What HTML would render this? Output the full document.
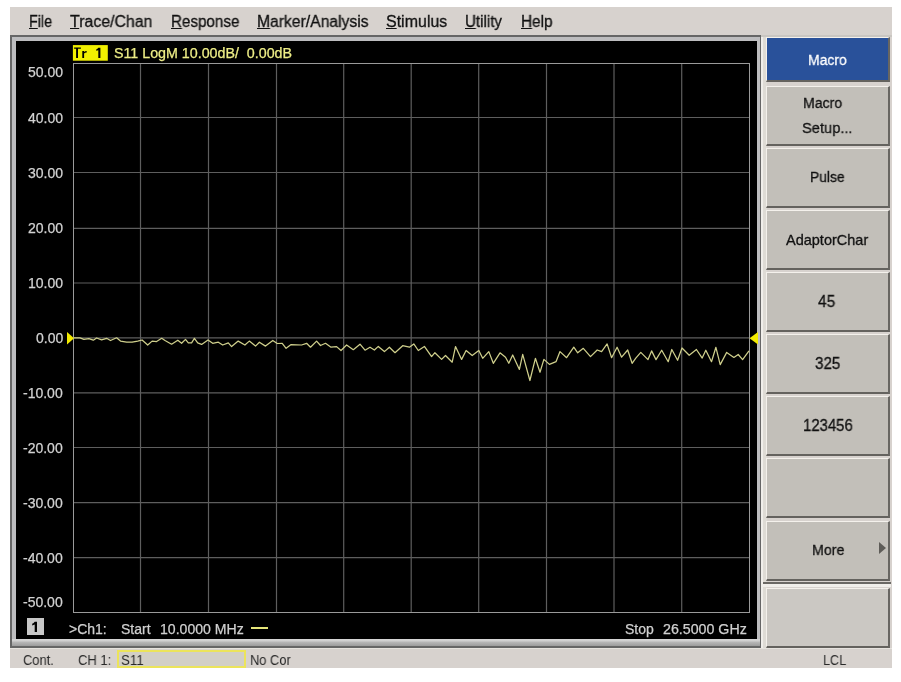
<!DOCTYPE html>
<html><head><meta charset="utf-8"><style>
*{margin:0;padding:0;box-sizing:border-box}
html,body{width:901px;height:682px;overflow:hidden;background:#fff;font-family:"Liberation Sans",sans-serif}
#w{position:absolute;left:0;top:0;width:901px;height:682px;filter:blur(0.35px)}
.a{position:absolute}
.t{position:absolute;white-space:nowrap;will-change:transform}
.b{-webkit-text-stroke:0.3px currentColor}
.p{-webkit-text-stroke:0.25px currentColor}
.t u{text-decoration:underline;text-underline-offset:0.7px;text-decoration-thickness:1px}
.btn{position:absolute;left:766px;width:124px;background:#c2bfb9;border-top:1px solid #f4f1ec;border-left:1px solid #f4f1ec;border-right:2px solid #686662;border-bottom:2px solid #64625e}
</style></head><body><div id="w">
<div class="a" style="left:10px;top:7px;width:882px;height:661px;background:#d7d2ce"></div>
<div class="t b" style="left:29.20px;top:13.96px;font-size:16px;line-height:16px;color:#111;transform:scaleX(0.8929);transform-origin:0.00px 0;"><u>F</u>ile</div>
<div class="t b" style="left:70.00px;top:13.96px;font-size:16px;line-height:16px;color:#111;transform:scaleX(0.9935);transform-origin:0.00px 0;"><u>T</u>race/Chan</div>
<div class="t b" style="left:171.00px;top:13.96px;font-size:16px;line-height:16px;color:#111;transform:scaleX(0.9489);transform-origin:0.00px 0;"><u>R</u>esponse</div>
<div class="t b" style="left:257.20px;top:13.96px;font-size:16px;line-height:16px;color:#111;transform:scaleX(0.9803);transform-origin:0.00px 0;"><u>M</u>arker/Analysis</div>
<div class="t b" style="left:386.00px;top:13.96px;font-size:16px;line-height:16px;color:#111;transform:scaleX(0.9974);transform-origin:0.00px 0;"><u>S</u>timulus</div>
<div class="t b" style="left:465.00px;top:13.96px;font-size:16px;line-height:16px;color:#111;transform:scaleX(0.9458);transform-origin:0.00px 0;"><u>U</u>tility</div>
<div class="t b" style="left:521.00px;top:13.96px;font-size:16px;line-height:16px;color:#111;transform:scaleX(0.9580);transform-origin:0.00px 0;"><u>H</u>elp</div>

<!-- plot frame -->
<div class="a" style="left:10px;top:35px;width:751px;height:613px;background:#666"></div>
<div class="a" style="left:10px;top:648px;width:882px;height:1px;background:#e6e3de"></div>
<div class="a" style="left:12px;top:37px;width:748px;height:609px;background:#bdbdbf"></div>
<div class="a" style="left:12px;top:639px;width:748px;height:7px;background:linear-gradient(#d6d6d6 0,#d0d0d0 2px,#b8b8b8 3px,#9c9c9c 7px)"></div>
<div class="a" style="left:16px;top:41px;width:741px;height:598px;background:#000"></div>
<div class="a" style="left:761px;top:35px;width:6px;height:613px;background:#dedbd5"></div>
<div class="a" style="left:761px;top:35px;width:2px;height:613px;background:#f0eeea"></div>
<div class="a" style="left:761px;top:35px;width:131px;height:2px;background:#c9c6c1"></div>
<svg class="a" style="left:0;top:0" width="901" height="682">
<g stroke="#5e5e5e" stroke-width="1.2"><line x1="140.5" y1="63.5" x2="140.5" y2="612.5"/><line x1="208.5" y1="63.5" x2="208.5" y2="612.5"/><line x1="276.5" y1="63.5" x2="276.5" y2="612.5"/><line x1="343.7" y1="63.5" x2="343.7" y2="612.5"/><line x1="411.2" y1="63.5" x2="411.2" y2="612.5"/><line x1="478.7" y1="63.5" x2="478.7" y2="612.5"/><line x1="546.5" y1="63.5" x2="546.5" y2="612.5"/><line x1="614" y1="63.5" x2="614" y2="612.5"/><line x1="681.7" y1="63.5" x2="681.7" y2="612.5"/><line x1="73.5" y1="117.5" x2="749.5" y2="117.5"/><line x1="73.5" y1="172.5" x2="749.5" y2="172.5"/><line x1="73.5" y1="228.3" x2="749.5" y2="228.3"/><line x1="73.5" y1="283" x2="749.5" y2="283"/><line x1="73.5" y1="337.9" x2="749.5" y2="337.9"/><line x1="73.5" y1="392.8" x2="749.5" y2="392.8"/><line x1="73.5" y1="447.5" x2="749.5" y2="447.5"/><line x1="73.5" y1="502.6" x2="749.5" y2="502.6"/><line x1="73.5" y1="557.6" x2="749.5" y2="557.6"/></g><g stroke="#9a9a9a" stroke-width="1" shape-rendering="crispEdges"><rect x="73.5" y="63.5" width="676.0" height="549.0" fill="none"/></g>
<polyline points="73.9,337.8 80.0,337.8 83.9,339.4 88.9,338.6 93.3,340.2 96.6,338.0 101.6,339.8 106.6,338.3 110.5,340.5 116.6,337.8 120.5,341.1 126.6,342.2 132.1,342.2 137.7,341.1 142.1,340.0 147.7,345.0 152.1,341.1 156.6,341.6 161.7,338.3 165.0,340.5 171.6,344.2 177.8,340.2 181.6,343.3 185.5,339.4 188.3,342.8 191.6,342.8 194.4,338.3 197.7,342.8 201.6,344.4 208.0,340.0 212.7,343.3 218.3,342.2 222.7,345.0 228.3,342.8 231.6,346.6 238.2,341.1 244.9,345.0 249.3,341.1 255.5,346.1 259.4,342.2 265.5,346.1 272.8,340.5 277.2,343.5 282.2,343.3 286.1,348.3 291.1,344.6 301.6,345.0 306.6,343.3 310.5,347.2 316.6,341.1 320.5,345.5 325.5,343.3 331.0,347.2 336.6,346.6 341.0,350.5 346.6,345.0 353.3,349.7 360.0,344.2 365.0,350.2 370.0,347.2 374.4,350.0 378.3,346.4 384.4,351.6 389.4,347.2 395.0,352.7 402.7,345.7 409.4,347.2 413.8,343.9 418.3,350.5 424.4,346.4 431.6,356.6 434.9,352.7 441.6,359.4 445.5,355.5 452.2,362.2 455.5,346.6 461.6,359.4 466.1,350.5 472.2,355.5 478.8,350.5 482.7,358.3 488.8,351.6 493.3,363.3 500.0,352.8 505.5,357.2 508.8,363.3 512.7,355.0 519.4,369.4 522.7,354.4 529.9,380.5 535.4,358.3 540.0,372.2 543.9,359.4 549.4,364.4 556.1,361.6 560.0,351.6 566.6,357.7 573.8,347.2 577.7,352.8 583.3,348.3 590.5,356.6 597.2,350.0 601.6,351.6 607.1,343.9 611.6,357.7 617.1,347.2 621.6,357.2 627.7,350.0 632.1,363.3 635.8,358.1 640.8,352.4 648.0,359.6 651.6,350.9 656.0,359.6 661.7,350.2 668.2,361.7 671.8,349.5 677.6,360.3 682.0,348.0 689.2,355.3 696.4,349.5 702.2,358.1 705.8,350.2 711.5,361.7 715.9,347.3 720.2,364.6 726.7,352.4 733.9,357.4 738.2,354.5 742.6,359.6 749.0,350.9" fill="none" stroke="#cfcf8c" stroke-width="1.25" stroke-linejoin="round"/>
<polygon points="67,332 67,344.5 74,338.2" fill="#f2ea00"/>
<polygon points="758,332 758,344.5 749.5,338.2" fill="#f2ea00"/>
<rect x="251" y="627" width="17" height="2" fill="#e6e67a"/>
<rect x="72.9" y="45.1" width="34.9" height="15.6" fill="#f2f000"/>
<path d="M74.1 47.4H80.9V48.8H78V57.9H76.1V48.8H74.1Z M82.3 50.9H84.1V52Q85 50.9 86.7 50.9V52.4Q84.8 52.4 84.1 53.6V57.9H82.3Z M98.3 47.7H100.4V57.9H98.3V50.2Q97.4 50.6 96.2 50.8V49.4Q97.6 48.9 98.3 47.7Z" fill="#000"/>

</svg>
<div class="t p" style="left:27.73px;top:64.65px;font-size:14px;line-height:14px;color:#d2d2d2;">50.00</div>
<div class="t p" style="left:27.73px;top:111.35px;font-size:14px;line-height:14px;color:#d2d2d2;">40.00</div>
<div class="t p" style="left:27.73px;top:166.25px;font-size:14px;line-height:14px;color:#d2d2d2;">30.00</div>
<div class="t p" style="left:27.73px;top:221.15px;font-size:14px;line-height:14px;color:#d2d2d2;">20.00</div>
<div class="t p" style="left:27.73px;top:276.05px;font-size:14px;line-height:14px;color:#d2d2d2;">10.00</div>
<div class="t p" style="left:35.57px;top:330.95px;font-size:14px;line-height:14px;color:#d2d2d2;">0.00</div>
<div class="t p" style="left:23.11px;top:385.85px;font-size:14px;line-height:14px;color:#d2d2d2;">-10.00</div>
<div class="t p" style="left:23.11px;top:440.75px;font-size:14px;line-height:14px;color:#d2d2d2;">-20.00</div>
<div class="t p" style="left:23.11px;top:495.65px;font-size:14px;line-height:14px;color:#d2d2d2;">-30.00</div>
<div class="t p" style="left:23.11px;top:550.55px;font-size:14px;line-height:14px;color:#d2d2d2;">-40.00</div>
<div class="t p" style="left:23.11px;top:595.05px;font-size:14px;line-height:14px;color:#d2d2d2;">-50.00</div>



<div class="t p" style="left:114.00px;top:46.14px;font-size:14.25px;line-height:14.25px;color:#eeee86;">S11&nbsp;LogM&nbsp;10.00dB/&nbsp;&nbsp;0.00dB</div>

<div class="a" style="left:27px;top:617.7px;width:16.8px;height:17.7px;background:#c8c8c8"></div>
<svg class="a" style="left:0;top:0" width="901" height="682"><path d="M34.7 621.8H37V632H34.7V624.6Q33.6 625.2 32.2 625.4V623.8Q33.8 623.3 34.7 621.8Z" fill="#000"/></svg>

<div class="t p" style="left:68.60px;top:621.85px;font-size:14px;line-height:14px;color:#d0d0d0;">&gt;Ch1:</div>
<div class="t p" style="left:120.80px;top:621.85px;font-size:14px;line-height:14px;color:#d0d0d0;">Start</div>
<div class="t p" style="left:160.30px;top:621.85px;font-size:14px;line-height:14px;color:#d0d0d0;transform:scaleX(1.0048);transform-origin:0.00px 0;">10.0000&nbsp;MHz</div>

<div class="t p" style="left:625.30px;top:621.65px;font-size:14px;line-height:14px;color:#d0d0d0;">Stop</div>
<div class="t p" style="left:663.00px;top:621.65px;font-size:14px;line-height:14px;color:#d0d0d0;transform:scaleX(1.0154);transform-origin:0.00px 0;">26.5000&nbsp;GHz</div>

<!-- buttons -->
<div class="btn" style="top:37px;height:45px;background:#29519a"></div>
<div class="btn" style="top:85.50px;height:60px"></div>
<div class="btn" style="top:147.65px;height:60px"></div>
<div class="btn" style="top:209.80px;height:60px"></div>
<div class="btn" style="top:271.95px;height:60px"></div>
<div class="btn" style="top:334.10px;height:60px"></div>
<div class="btn" style="top:396.25px;height:60px"></div>
<div class="btn" style="top:458.40px;height:60px"></div>
<div class="btn" style="top:520.55px;height:60px"></div>

<div class="a" style="left:763px;top:582px;width:128px;height:2px;background:#6a6864"></div>
<div class="a" style="left:763px;top:584px;width:128px;height:3px;background:#f0eeea"></div>
<div class="btn" style="top:587.5px;height:60px;background:#cbc8c3"></div>
<div class="t b" style="left:808.20px;top:51.88px;font-size:15.5px;line-height:15.5px;color:#fff;transform:scaleX(0.9004);transform-origin:0.00px 0;">Macro</div>

<div class="t b" style="left:802.70px;top:95.38px;font-size:15.5px;line-height:15.5px;color:#111;transform:scaleX(0.9097);transform-origin:0.00px 0;">Macro</div>

<div class="t b" style="left:802.00px;top:120.18px;font-size:15.5px;line-height:15.5px;color:#111;transform:scaleX(0.9457);transform-origin:0.00px 0;">Setup...</div>

<div class="t b" style="left:810.20px;top:170.43px;font-size:14.5px;line-height:14.5px;color:#111;transform:scaleX(0.9517);transform-origin:0.00px 0;">Pulse</div>

<div class="t b" style="left:786.00px;top:233.33px;font-size:14.5px;line-height:14.5px;color:#111;transform:scaleX(0.9986);transform-origin:0.00px 0;">AdaptorChar</div>

<div class="t b" style="left:818.40px;top:294.06px;font-size:16px;line-height:16px;color:#111;transform:scaleX(0.9628);transform-origin:0.00px 0;">45</div>

<div class="t b" style="left:814.90px;top:356.06px;font-size:16px;line-height:16px;color:#111;transform:scaleX(0.9469);transform-origin:0.00px 0;">325</div>

<div class="t b" style="left:802.70px;top:418.26px;font-size:16px;line-height:16px;color:#111;transform:scaleX(0.9314);transform-origin:0.00px 0;">123456</div>

<div class="t b" style="left:811.60px;top:542.08px;font-size:15.5px;line-height:15.5px;color:#111;transform:scaleX(0.9168);transform-origin:0.00px 0;">More</div>

<div class="a" style="left:879px;top:542px;width:0;height:0;border-left:7px solid #5e5c58;border-top:6.5px solid transparent;border-bottom:6.5px solid transparent"></div>
<!-- status bar -->
<div class="a" style="left:117px;top:650px;width:129px;height:18px;border:2.5px solid #ece45a;background:#d2cfc6"></div>
<div class="t" style="left:22.50px;top:652.00px;font-size:15px;line-height:15px;color:#2a2a2a;transform:scaleX(0.8591);transform-origin:0.00px 0;">Cont.</div>

<div class="t" style="left:77.50px;top:652.00px;font-size:15px;line-height:15px;color:#2a2a2a;transform:scaleX(0.8689);transform-origin:0.00px 0;">CH&nbsp;1:</div>

<div class="t" style="left:121.30px;top:652.00px;font-size:15px;line-height:15px;color:#2a2a2a;transform:scaleX(0.8876);transform-origin:0.00px 0;">S11</div>

<div class="t" style="left:249.60px;top:652.00px;font-size:15px;line-height:15px;color:#2a2a2a;transform:scaleX(0.8580);transform-origin:0.00px 0;">No&nbsp;Cor</div>

<div class="t" style="left:823.40px;top:651.80px;font-size:15px;line-height:15px;color:#2a2a2a;transform:scaleX(0.8429);transform-origin:0.00px 0;">LCL</div>

</div></body></html>
